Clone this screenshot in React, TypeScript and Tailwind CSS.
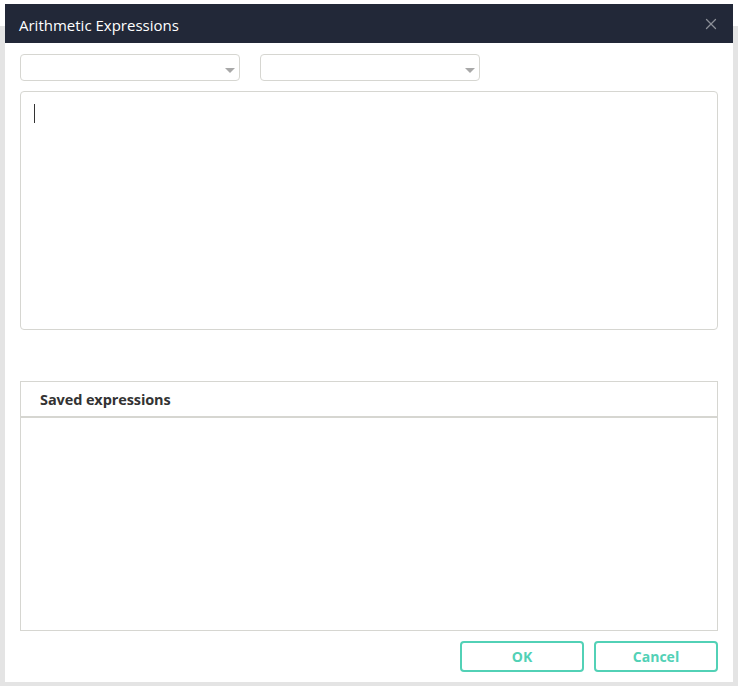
import { X } from "lucide-react";

function Select() {
  return (
    <div className="relative h-[27px] w-[220px] rounded-[4px] border border-[#d6d6d1] bg-white">
      <span className="absolute right-[4px] top-[13px] h-0 w-0 border-x-[5px] border-t-[5px] border-x-transparent border-t-[#a8a8a8]" />
    </div>
  );
}

export default function App() {
  return (
    <div
      className="flex h-[686px] w-[738px] bg-[linear-gradient(to_bottom,white_26px,#e4e4e4_26px)] pl-[5px] pt-[4px]"
      style={{ fontFamily: '"Open Sans", "Noto Sans", sans-serif' }}
    >
      <div className="flex h-[678px] w-[728px] flex-col bg-white">
        <div className="flex h-[39px] items-center justify-between bg-[#222838] pl-[14px] pr-[13px] pt-[3px]">
          <span className="text-[15px] text-white">Arithmetic Expressions</span>
          <X size={18} strokeWidth={1.7} className="-mt-[3px] text-[#8c8f97]" />
        </div>

        <div className="flex flex-1 flex-col px-[15px]">
          <div className="mt-[11px] flex gap-[20px]">
            <Select />
            <Select />
          </div>

          <div className="mt-[10px] h-[239px] rounded-[4px] border border-[#d6d6d1] px-[13px] pt-[12px]">
            <div className="h-[19px] w-px bg-[#333]" />
          </div>

          <div className="mt-[51px] flex h-[250px] flex-col border border-[#d6d6d1]">
            <div className="flex h-[36px] items-center border-b-2 border-[#d6d6d1] pl-[19px] pt-[2px]">
              <span className="text-[14.5px] font-bold tracking-[-0.1px] text-[#333]">Saved expressions</span>
            </div>
          </div>

          <div className="mt-[10px] flex justify-end gap-[10px]">
            <button className="h-[31px] w-[124px] rounded-[4px] border-2 border-[#52d1b6] text-[14px] font-bold text-[#52d1b6]">
              OK
            </button>
            <button className="h-[31px] w-[124px] rounded-[4px] border-2 border-[#52d1b6] text-[14px] font-bold text-[#52d1b6]">
              Cancel
            </button>
          </div>
        </div>
      </div>
    </div>
  );
}
